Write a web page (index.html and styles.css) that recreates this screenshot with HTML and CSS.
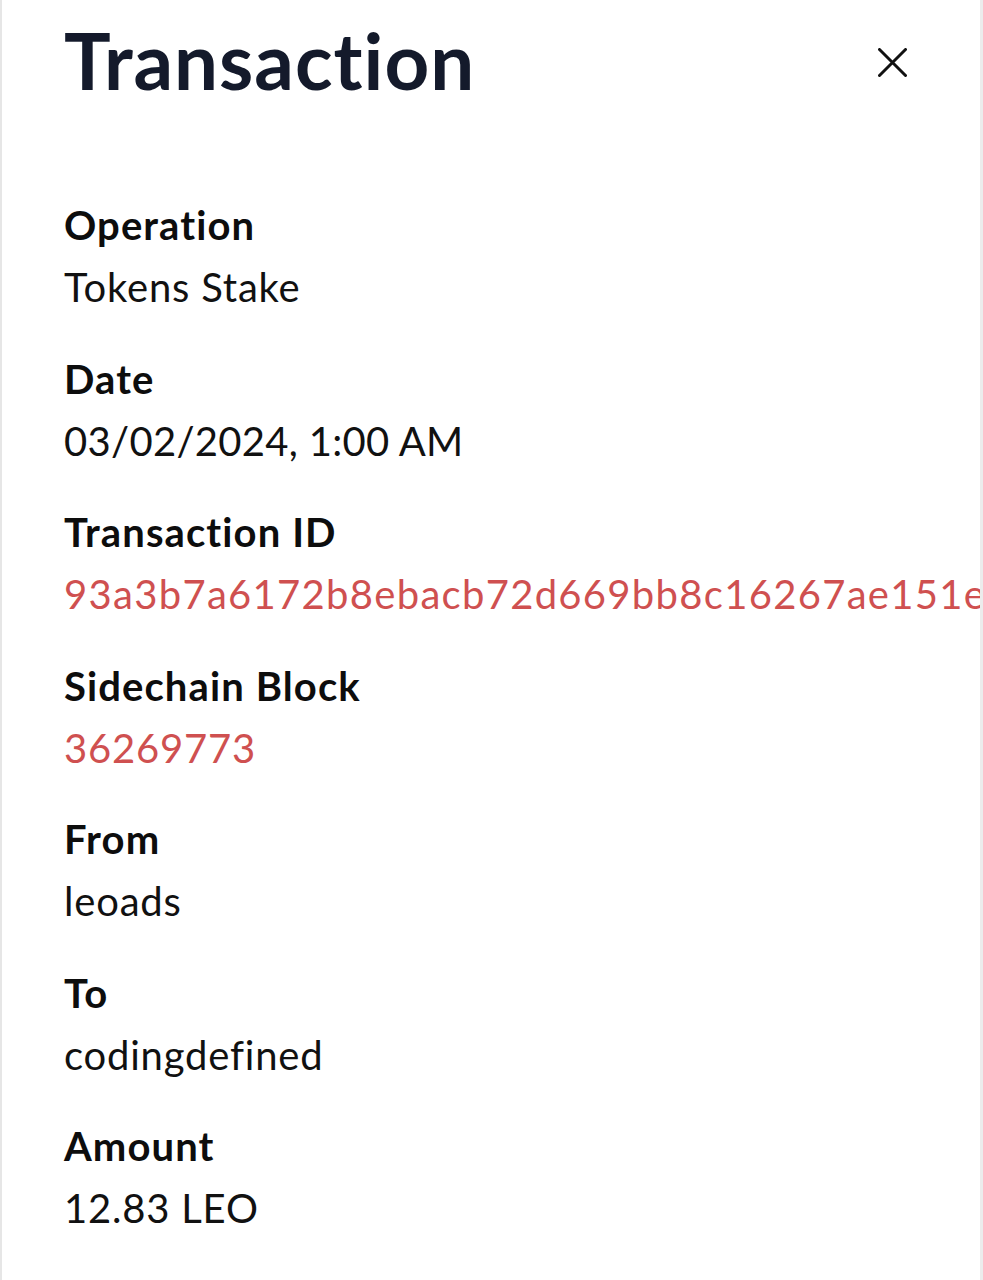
FILE: index.html
```html
<!DOCTYPE html>
<html lang="en">
<head>
    <meta charset="UTF-8">
    <meta name="viewport" content="width=device-width, initial-scale=1.0">
    <title>Transaction</title>
    <link rel="stylesheet" href="styles.css">
</head>
<body>
    <div class="panel">
        <div class="panel-header">
            <h1>Transaction</h1>
            <button class="close-btn" aria-label="Close">
                <svg width="29" height="29" viewBox="0 0 29 29">
                    <path d="M1.5 1.5 L27.5 27.5 M27.5 1.5 L1.5 27.5" stroke="#111" stroke-width="3" stroke-linecap="round" fill="none"/>
                </svg>
            </button>
        </div>

        <div class="details">
            <div class="field">
                <div class="label">Operation</div>
                <div class="value">Tokens Stake</div>
            </div>
            <div class="field">
                <div class="label">Date</div>
                <div class="value date">03/02/2024, 1:00 AM</div>
            </div>
            <div class="field">
                <div class="label">Transaction ID</div>
                <div class="value link hash">93a3b7a6172b8ebacb72d669bb8c16267ae151e</div>
            </div>
            <div class="field">
                <div class="label">Sidechain Block</div>
                <div class="value link">36269773</div>
            </div>
            <div class="field">
                <div class="label">From</div>
                <div class="value">leoads</div>
            </div>
            <div class="field">
                <div class="label">To</div>
                <div class="value">codingdefined</div>
            </div>
            <div class="field">
                <div class="label">Amount</div>
                <div class="value">12.83 LEO</div>
            </div>
        </div>
    </div>
</body>
</html>
```

FILE: styles.css
```css
body {
    font-family: Lato, "Noto Sans", sans-serif;
    background-color: #ffffff;
    margin: 0;
    padding: 0;
}

.panel {
    height: 1280px;
    box-sizing: border-box;
    border-left: 2px solid #e6e6e6;
    border-right: 3px solid #ececec;
    padding: 0 0 0 62px;
    overflow: hidden;
}

.panel-header {
    display: flex;
    align-items: center;
    justify-content: space-between;
    padding: 12px 73px 0 0;
    height: 96px;
}

h1 {
    margin: 0;
    font-size: 78px;
    font-weight: 700;
    line-height: 96px;
    color: #141a2b;
    letter-spacing: 1px;
}

.close-btn {
    background: none;
    border: none;
    padding: 0;
    margin-top: 4px;
    cursor: pointer;
    display: flex;
}

.details {
    padding-top: 87px;
}

.field {
    margin-bottom: 31.5px;
}

.label {
    font-size: 40px;
    font-weight: 700;
    line-height: 60px;
    color: #0d0d0d;
    letter-spacing: 1.1px;
}

.value {
    margin-top: 2px;
    font-size: 40px;
    line-height: 60px;
    color: #111111;
    letter-spacing: 0.8px;
    white-space: nowrap;
}

.date {
    letter-spacing: 0.3px;
}

.hash {
    letter-spacing: 1.3px;
}

.link {
    color: #cf5050;
}
```
